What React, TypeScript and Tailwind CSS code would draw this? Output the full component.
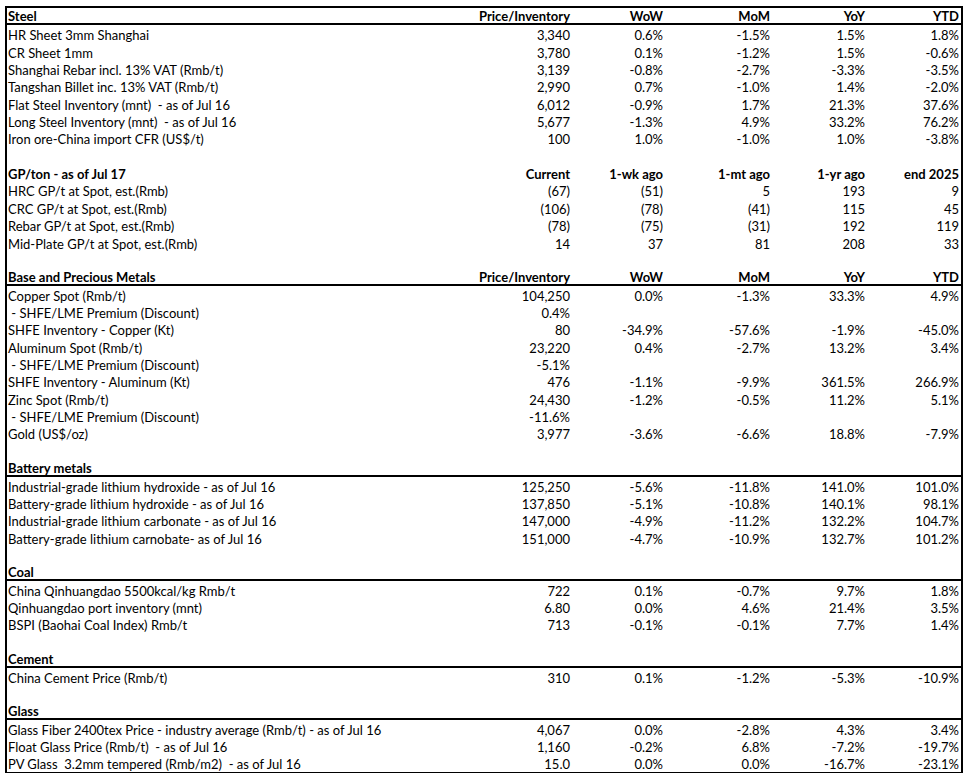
import React from "react";

type Row =
  | { kind: "head"; label: string; cols: string[]; line?: boolean }
  | { kind: "data"; label: string; cols: string[] }
  | { kind: "blank" };

const H = ["Price/Inventory", "WoW", "MoM", "YoY", "YTD"];

const rows: Row[] = [
  { kind: "head", label: "Steel", cols: H, line: true },
  { kind: "data", label: "HR Sheet 3mm Shanghai", cols: ["3,340", "0.6%", "-1.5%", "1.5%", "1.8%"] },
  { kind: "data", label: "CR Sheet 1mm", cols: ["3,780", "0.1%", "-1.2%", "1.5%", "-0.6%"] },
  { kind: "data", label: "Shanghai Rebar incl. 13% VAT (Rmb/t)", cols: ["3,139", "-0.8%", "-2.7%", "-3.3%", "-3.5%"] },
  { kind: "data", label: "Tangshan Billet inc. 13% VAT (Rmb/t)", cols: ["2,990", "0.7%", "-1.0%", "1.4%", "-2.0%"] },
  { kind: "data", label: "Flat Steel Inventory (mnt)  - as of Jul 16", cols: ["6,012", "-0.9%", "1.7%", "21.3%", "37.6%"] },
  { kind: "data", label: "Long Steel Inventory (mnt)  - as of Jul 16", cols: ["5,677", "-1.3%", "4.9%", "33.2%", "76.2%"] },
  { kind: "data", label: "Iron ore-China import CFR (US$/t)", cols: ["100", "1.0%", "-1.0%", "1.0%", "-3.8%"] },
  { kind: "blank" },
  { kind: "head", label: "GP/ton - as of Jul 17", cols: ["Current", "1-wk ago", "1-mt ago", "1-yr ago", "end 2025"] },
  { kind: "data", label: "HRC GP/t at Spot, est.(Rmb)", cols: ["(67)", "(51)", "5", "193", "9"] },
  { kind: "data", label: "CRC GP/t at Spot, est.(Rmb)", cols: ["(106)", "(78)", "(41)", "115", "45"] },
  { kind: "data", label: "Rebar GP/t at Spot, est.(Rmb)", cols: ["(78)", "(75)", "(31)", "192", "119"] },
  { kind: "data", label: "Mid-Plate GP/t at Spot, est.(Rmb)", cols: ["14", "37", "81", "208", "33"] },
  { kind: "blank" },
  { kind: "head", label: "Base and Precious Metals", cols: H, line: true },
  { kind: "data", label: "Copper Spot (Rmb/t)", cols: ["104,250", "0.0%", "-1.3%", "33.3%", "4.9%"] },
  { kind: "data", label: " - SHFE/LME Premium (Discount)", cols: ["0.4%", "", "", "", ""] },
  { kind: "data", label: "SHFE Inventory - Copper (Kt)", cols: ["80", "-34.9%", "-57.6%", "-1.9%", "-45.0%"] },
  { kind: "data", label: "Aluminum Spot (Rmb/t)", cols: ["23,220", "0.4%", "-2.7%", "13.2%", "3.4%"] },
  { kind: "data", label: " - SHFE/LME Premium (Discount)", cols: ["-5.1%", "", "", "", ""] },
  { kind: "data", label: "SHFE Inventory - Aluminum (Kt)", cols: ["476", "-1.1%", "-9.9%", "361.5%", "266.9%"] },
  { kind: "data", label: "Zinc Spot (Rmb/t)", cols: ["24,430", "-1.2%", "-0.5%", "11.2%", "5.1%"] },
  { kind: "data", label: " - SHFE/LME Premium (Discount)", cols: ["-11.6%", "", "", "", ""] },
  { kind: "data", label: "Gold (US$/oz)", cols: ["3,977", "-3.6%", "-6.6%", "18.8%", "-7.9%"] },
  { kind: "blank" },
  { kind: "head", label: "Battery metals", cols: ["", "", "", "", ""], line: true },
  { kind: "data", label: "Industrial-grade lithium hydroxide - as of Jul 16", cols: ["125,250", "-5.6%", "-11.8%", "141.0%", "101.0%"] },
  { kind: "data", label: "Battery-grade lithium hydroxide - as of Jul 16", cols: ["137,850", "-5.1%", "-10.8%", "140.1%", "98.1%"] },
  { kind: "data", label: "Industrial-grade lithium carbonate - as of Jul 16", cols: ["147,000", "-4.9%", "-11.2%", "132.2%", "104.7%"] },
  { kind: "data", label: "Battery-grade lithium carnobate- as of Jul 16", cols: ["151,000", "-4.7%", "-10.9%", "132.7%", "101.2%"] },
  { kind: "blank" },
  { kind: "head", label: "Coal", cols: ["", "", "", "", ""], line: true },
  { kind: "data", label: "China Qinhuangdao 5500kcal/kg Rmb/t", cols: ["722", "0.1%", "-0.7%", "9.7%", "1.8%"] },
  { kind: "data", label: "Qinhuangdao port inventory (mnt)", cols: ["6.80", "0.0%", "4.6%", "21.4%", "3.5%"] },
  { kind: "data", label: "BSPI (Baohai Coal Index) Rmb/t", cols: ["713", "-0.1%", "-0.1%", "7.7%", "1.4%"] },
  { kind: "blank" },
  { kind: "head", label: "Cement", cols: ["", "", "", "", ""], line: true },
  { kind: "data", label: "China Cement Price (Rmb/t)", cols: ["310", "0.1%", "-1.2%", "-5.3%", "-10.9%"] },
  { kind: "blank" },
  { kind: "head", label: "Glass", cols: ["", "", "", "", ""], line: true },
  { kind: "data", label: "Glass Fiber 2400tex Price - industry average (Rmb/t) - as of Jul 16", cols: ["4,067", "0.0%", "-2.8%", "4.3%", "3.4%"] },
  { kind: "data", label: "Float Glass Price (Rmb/t)  - as of Jul 16", cols: ["1,160", "-0.2%", "6.8%", "-7.2%", "-19.7%"] },
  { kind: "data", label: "PV Glass  3.2mm tempered (Rmb/m2)  - as of Jul 16", cols: ["15.0", "0.0%", "0.0%", "-16.7%", "-23.1%"] },
];

const colW = ["w-[100px]", "w-[93px]", "w-[107px]", "w-[95px]", "w-[94px]"];

function Cells({ cols }: { cols: string[] }) {
  return (
    <>
      {cols.map((c, i) => (
        <div key={i} className={`${colW[i]} shrink-0 pr-[2px] text-right whitespace-pre`}>
          {c}
        </div>
      ))}
    </>
  );
}

export default function App() {
  return (
    <div className="w-[965px] h-[773px] bg-white overflow-hidden">
      <div
        className="ml-[5px] mt-[6px] w-[958px] border-x-2 border-t-2 border-b-[1.5px] border-black text-black text-[13px] leading-none"
        style={{ fontFamily: "Lato, 'Open Sans', sans-serif" }}
      >
        {rows.map((r, idx) => {
          if (r.kind === "blank") return <div key={idx} className="h-[17.36px]" />;
          const head = r.kind === "head";
          const line = head && r.line;
          return (
            <div
              key={idx}
              className={`flex items-end h-[17.36px] ${head ? "font-bold" : ""} ${line ? "border-b-2 border-black" : "pb-[0.5px]"}`}
            >
              <div className="w-[465px] shrink-0 pl-[1px] whitespace-pre">{r.label}</div>
              <Cells cols={r.cols} />
            </div>
          );
        })}
      </div>
    </div>
  );
}
